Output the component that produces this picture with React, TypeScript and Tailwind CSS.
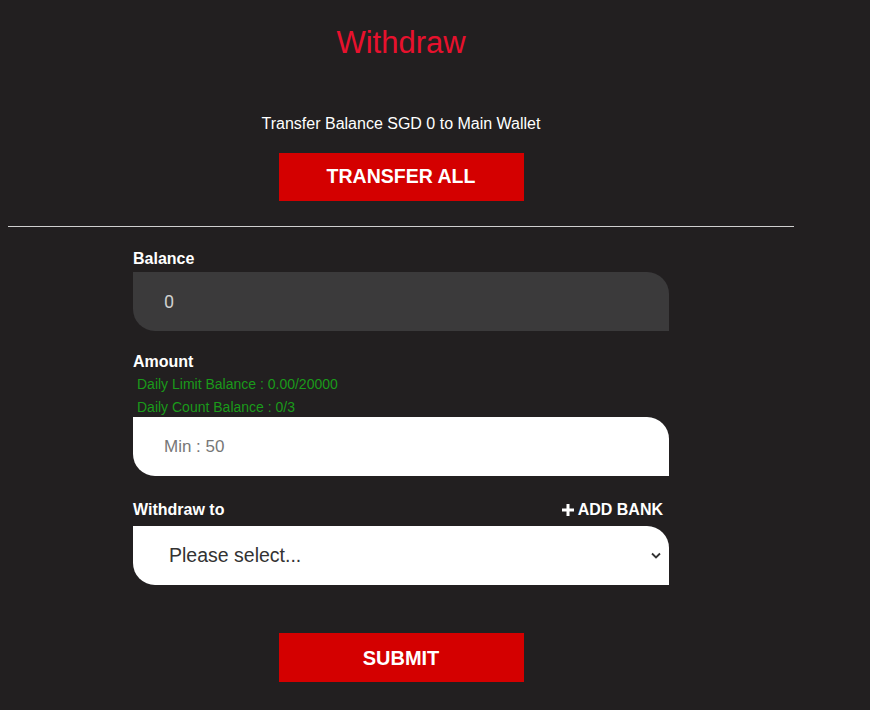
import { FunctionComponent, useState } from "react";

const App: FunctionComponent = () => {
  const [amount, setAmount] = useState("");
  const [bank, setBank] = useState("");

  return (
    <div className="min-h-[710px] w-full bg-[#221f20] font-[family-name:Liberation_Sans,Arial,sans-serif] text-white">
      <div className="w-[786px] ml-[8px] flex flex-col items-center">
        <h1 className="mt-[26px] text-[31px] leading-[34px] text-[#e8112d]">Withdraw</h1>

        <p className="mt-[55px] text-[16px] leading-[18px]">Transfer Balance SGD 0 to Main Wallet</p>
        <button className="mt-[20px] w-[245px] h-[48px] bg-[#d40000] text-[19.5px] font-bold">
          TRANSFER ALL
        </button>

        <hr className="mt-[25px] w-full border-t border-[#cfcfcf]" />

        <div className="w-[536px] mt-[23px] flex flex-col">
          {/* balance */}
          <label className="text-[16px] leading-[18px] font-bold">Balance</label>
          <div className="mt-[4px] h-[59px] bg-[#3b3a3b] rounded-tr-[22px] rounded-bl-[22px] pl-[31px] flex items-center text-[18px] text-[#d0d0d0] font-[family-name:Roboto,sans-serif]">
            0
          </div>

          {/* amount */}
          <label className="mt-[22px] text-[16px] leading-[18px] font-bold">Amount</label>
          <span className="mt-[5px] ml-[4px] text-[14px] leading-[16px] text-[#1a9a1a]">
            Daily Limit Balance : 0.00/20000
          </span>
          <span className="mt-[7px] ml-[4px] text-[14px] leading-[16px] text-[#1a9a1a]">
            Daily Count Balance : 0/3
          </span>
          <input
            value={amount}
            onChange={(e) => setAmount(e.target.value)}
            placeholder="Min : 50"
            className="mt-[2px] h-[59px] bg-white rounded-tr-[22px] rounded-bl-[22px] pl-[31px] text-[17px] text-[#333] placeholder:text-[#777] outline-none"
          />

          {/* withdraw to */}
          <div className="mt-[25px] flex justify-between items-center pr-[6px]">
            <label className="text-[16px] leading-[18px] font-bold">Withdraw to</label>
            <span className="text-[16px] leading-[18px] font-bold flex items-center gap-[3px]">
              <svg width="14" height="14" viewBox="0 0 14 14">
                <path d="M7 1v12M1 7h12" stroke="white" strokeWidth="3" />
              </svg>
              ADD BANK
            </span>
          </div>
          <div className="relative mt-[7px]">
            <select
              value={bank}
              onChange={(e) => setBank(e.target.value)}
              className="appearance-none w-full h-[59px] bg-white rounded-tr-[22px] rounded-bl-[22px] pl-[36px] text-[19.5px] text-[#333] outline-none"
            >
              <option value="">Please select...</option>
            </select>
            <svg className="absolute right-[8px] top-[26px] pointer-events-none" width="10" height="7" viewBox="0 0 10 7">
              <path d="M1 1.5l4 4 4-4" stroke="#333" strokeWidth="1.8" fill="none" />
            </svg>
          </div>
        </div>

        <button className="mt-[48px] w-[245px] h-[49px] bg-[#d40000] text-[20px] font-bold">
          SUBMIT
        </button>
      </div>
    </div>
  );
};

export default App;
